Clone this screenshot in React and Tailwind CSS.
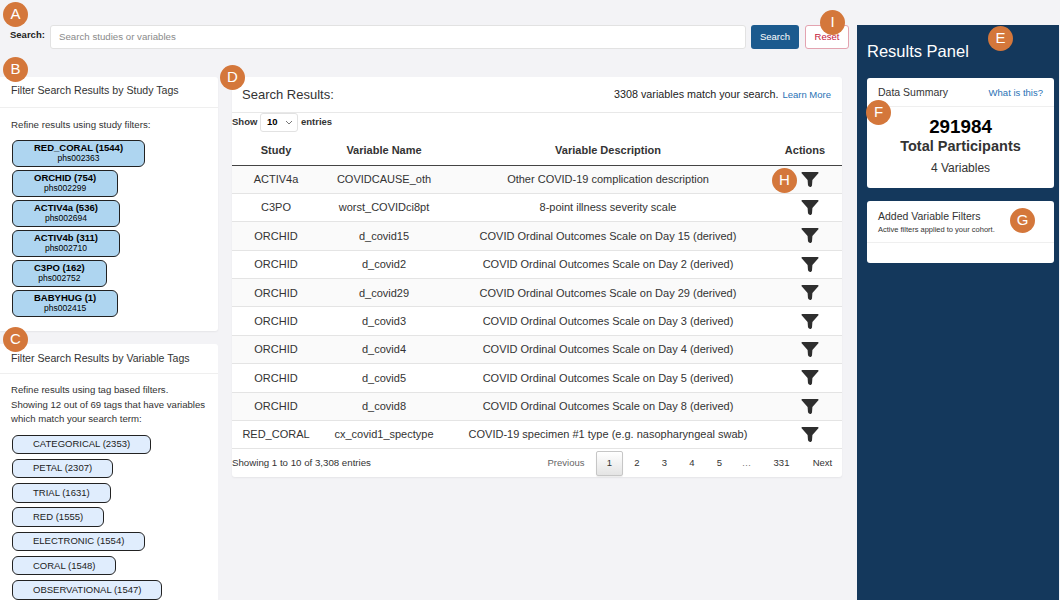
import React from "react";

const studyTags = [
  { name: "RED_CORAL (1544)", id: "phs002363" },
  { name: "ORCHID (754)", id: "phs002299" },
  { name: "ACTIV4a (536)", id: "phs002694" },
  { name: "ACTIV4b (311)", id: "phs002710" },
  { name: "C3PO (162)", id: "phs002752" },
  { name: "BABYHUG (1)", id: "phs002415" },
];

const variableTags = [
  "CATEGORICAL (2353)",
  "PETAL (2307)",
  "TRIAL (1631)",
  "RED (1555)",
  "ELECTRONIC (1554)",
  "CORAL (1548)",
  "OBSERVATIONAL (1547)",
];

const rows = [
  ["ACTIV4a", "COVIDCAUSE_oth", "Other COVID-19 complication description"],
  ["C3PO", "worst_COVIDci8pt", "8-point illness severity scale"],
  ["ORCHID", "d_covid15", "COVID Ordinal Outcomes Scale on Day 15 (derived)"],
  ["ORCHID", "d_covid2", "COVID Ordinal Outcomes Scale on Day 2 (derived)"],
  ["ORCHID", "d_covid29", "COVID Ordinal Outcomes Scale on Day 29 (derived)"],
  ["ORCHID", "d_covid3", "COVID Ordinal Outcomes Scale on Day 3 (derived)"],
  ["ORCHID", "d_covid4", "COVID Ordinal Outcomes Scale on Day 4 (derived)"],
  ["ORCHID", "d_covid5", "COVID Ordinal Outcomes Scale on Day 5 (derived)"],
  ["ORCHID", "d_covid8", "COVID Ordinal Outcomes Scale on Day 8 (derived)"],
  ["RED_CORAL", "cx_covid1_spectype", "COVID-19 specimen #1 type (e.g. nasopharyngeal swab)"],
];

const Marker = ({ children, className }) => (
  <div
    className={`absolute z-10 flex h-[25px] w-[25px] items-center justify-center rounded-full bg-[#d4773b] text-[15px] text-white ${className}`}
  >
    {children}
  </div>
);

const Funnel = () => (
  <svg viewBox="0 0 18 15" className="mx-auto block h-[15px] w-[18px]">
    <path d="M0.4 1 Q0.4 0 1.4 0 L16.6 0 Q17.6 0 17.6 1 L11.4 8 L11 13.6 Q10.8 14.6 9.8 15 L9 15 Q7.4 14.4 7 13.2 L6.6 8 Z" fill="#2e2e2e" />
  </svg>
);

export default function App() {
  return (
    <div className="relative flex h-[600px] w-[1060px] overflow-hidden bg-[#f3f3f6] font-['Liberation_Sans',Arial,sans-serif] text-[#222]">
      <Marker className="left-[3px] top-[2px]">A</Marker>
      <Marker className="left-[3px] top-[57px]">B</Marker>
      <Marker className="left-[3px] top-[327px]">C</Marker>
      <Marker className="left-[220px] top-[65px]">D</Marker>
      <Marker className="left-[988px] top-[26px]">E</Marker>
      <Marker className="left-[866px] top-[100px]">F</Marker>
      <Marker className="left-[1010px] top-[208px]">G</Marker>
      <Marker className="left-[772px] top-[168px]">H</Marker>
      <Marker className="left-[820px] top-[10px]">I</Marker>

      <div className="flex w-[857px] shrink-0 flex-col pt-[25px]">
        <div className="flex h-[24px] items-start pl-[10px] pr-[8px]">
          <span className="mt-[3px] w-[40px] text-[9.5px] font-bold">Search:</span>
          <div className="flex h-[24px] w-[696px] items-center rounded-[3px] border border-[#e2e2e2] bg-white pl-[8px] text-[9.7px] text-[#8a8a8a]">
            Search studies or variables
          </div>
          <button className="ml-[5px] h-[24px] w-[48px] rounded-[3px] bg-[#1b5a8e] text-[9.5px] text-white">Search</button>
          <button className="ml-[6px] h-[24px] w-[44px] rounded-[3px] border border-[#e3a3b0] bg-white text-[9.5px] text-[#c4183c]">Reset</button>
        </div>
        <div className="ml-[10px] mr-[8px] mt-[14px] h-px bg-[#ececef]" />

        <div className="mt-[14px] flex items-start">
          <div className="w-[218px] shrink-0">
            <div className="h-[254px] rounded-r-[3px] bg-white shadow-[0_1px_2px_rgba(0,0,0,0.06)]">
              <div className="flex h-[31px] items-center border-b border-[#efefef] pb-[2px] pl-[11px] text-[10.6px] text-[#333]">
                Filter Search Results by Study Tags
              </div>
              <p className="pl-[11px] pt-[11px] text-[9.7px] leading-[11px] text-[#333]">Refine results using study filters:</p>
              <div className="mt-[10px] flex flex-col gap-[3.5px] pl-[12px]">
                {studyTags.map((tag) => (
                  <div
                    key={tag.id}
                    className="flex h-[26.5px] w-fit flex-col items-center justify-center rounded-[6px] border border-[#222] bg-[#aed5f0] px-[21px] leading-none text-black"
                  >
                    <span className="text-[9.5px] font-bold leading-[10px]">{tag.name}</span>
                    <span className="text-[8.5px] leading-[10px]">{tag.id}</span>
                  </div>
                ))}
              </div>
            </div>

            <div className="mt-[13px] h-[300px] rounded-r-[3px] bg-white">
              <div className="flex h-[30px] items-center border-b border-[#efefef] pl-[11px] text-[10.6px] text-[#333]">
                Filter Search Results by Variable Tags
              </div>
              <p className="pl-[11px] pt-[9px] text-[9.6px] leading-[14.5px] text-[#333]">
                Refine results using tag based filters.
                <br />
                Showing 12 out of 69 tags that have variables
                <br />
                which match your search term:
              </p>
              <div className="mt-[8px] flex flex-col gap-[4.8px] pl-[12px]">
                {variableTags.map((tag) => (
                  <div
                    key={tag}
                    className="flex h-[19.5px] w-fit items-center rounded-[6px] border border-[#222] bg-[#e0edfd] px-[20px] text-[9.5px] text-[#222]"
                  >
                    {tag}
                  </div>
                ))}
              </div>
            </div>
          </div>

          <div className="ml-[14px] h-[400px] w-[610px] rounded-[3px] bg-white shadow-[0_1px_2px_rgba(0,0,0,0.06)]">
            <div className="flex h-[36px] items-center justify-between border-b border-[#e8e8e8] pl-[10px] pr-[11px]">
              <span className="text-[13px] text-[#333]">Search Results:</span>
              <span className="text-[10.75px] text-[#222]">
                3308 variables match your search.
                <span className="ml-[4px] text-[9.5px] text-[#2a72b5]">Learn More</span>
              </span>
            </div>
            <div className="flex h-[19px] items-center text-[9.5px] font-bold text-[#333]">
              <span className="w-[28px]">Show</span>
              <div className="flex h-[19px] w-[38px] items-center justify-between rounded-[3px] border border-[#e2e2e2] pl-[6px] pr-[4px] font-normal text-black">
                <span className="font-bold">10</span>
                <svg viewBox="0 0 8 5" className="h-[5px] w-[8px]">
                  <path d="M1 1 L4 4 L7 1" fill="none" stroke="#555" strokeWidth="0.8" />
                </svg>
              </div>
              <span className="ml-[3px]">entries</span>
            </div>
            <table className="w-full table-fixed border-collapse text-[11px] text-[#333]">
              <thead>
                <tr className="h-[33px] border-b border-[#444]">
                  <th className="w-[88px] pt-[4px] font-bold">Study</th>
                  <th className="w-[128px] pt-[4px] font-bold">Variable Name</th>
                  <th className="w-[320px] pt-[4px] font-bold">Variable Description</th>
                  <th className="pt-[4px] font-bold">Actions</th>
                </tr>
              </thead>
              <tbody>
                {rows.map((row, i) => (
                  <tr key={row[1]} className={`h-[28.4px] border-b border-[#e4e4e4] text-center ${i % 2 === 0 ? "bg-[#fafafa]" : "bg-white"}`}>
                    <td>{row[0]}</td>
                    <td>{row[1]}</td>
                    <td className="whitespace-nowrap">{row[2]}</td>
                    <td className="pl-[10px]">
                      <Funnel />
                    </td>
                  </tr>
                ))}
              </tbody>
            </table>
            <div className="flex h-[28px] items-center text-[9.7px] text-[#333]">
              <span>Showing 1 to 10 of 3,308 entries</span>
              <div className="ml-auto flex h-[25px] w-[295px] items-center text-center text-[9.5px]">
                <span className="w-[38px] text-[#666]">Previous</span>
                <span className="ml-[11px] flex h-[25px] w-[27px] items-center justify-center rounded-[2px] border border-[#c6c6c6] bg-gradient-to-b from-white to-[#e4e4e4] shadow-[0_1px_1px_rgba(0,0,0,0.08)]">1</span>
                <span className="w-[28px]">2</span>
                <span className="w-[27px]">3</span>
                <span className="w-[28px]">4</span>
                <span className="w-[27px]">5</span>
                <span className="w-[27px] text-[#777]">…</span>
                <span className="w-[43px]">331</span>
                <span className="w-[39px]">Next</span>
              </div>
            </div>
          </div>
        </div>
      </div>

      <div className="mt-[25px] flex h-[575px] w-[202px] flex-col bg-[#14385c] pl-[10px] pr-[5px]">
        <h2 className="mt-[16px] text-[16.5px] leading-[20px] text-white">Results Panel</h2>
        <div className="mt-[17px] h-[110px] rounded-[3px] bg-white">
          <div className="flex h-[29px] items-center justify-between border-b border-[#efefef] pl-[11px] pr-[11px] pt-[2px] text-[10.5px]">
            <span className="text-[#333]">Data Summary</span>
            <span className="text-[9.5px] text-[#2a72b5]">What is this?</span>
          </div>
          <div className="flex flex-col items-center pt-[10px] text-center">
            <span className="text-[18.8px] font-bold leading-[20px] text-black">291984</span>
            <span className="text-[14.5px] font-bold leading-[18px] text-[#333]">Total Participants</span>
            <span className="mt-[6px] text-[12px] leading-[14px] text-[#333]">4 Variables</span>
          </div>
        </div>
        <div className="mt-[13px] h-[62px] rounded-[3px] bg-white">
          <div className="h-[42px] border-b border-[#efefef] pl-[11px] pt-[9px]">
            <div className="text-[10.5px] leading-[13px] text-[#333]">Added Variable Filters</div>
            <div className="mt-[1px] text-[7.5px] leading-[11px] text-[#333]">Active filters applied to your cohort.</div>
          </div>
        </div>
      </div>
    </div>
  );
}
